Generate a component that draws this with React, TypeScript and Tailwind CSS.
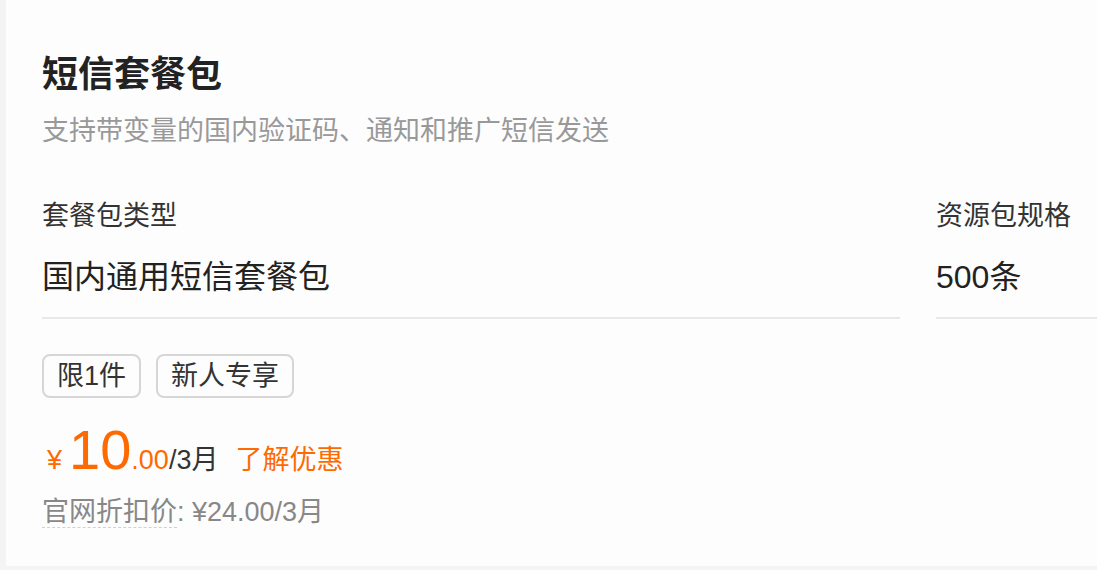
import React from "react";

const font = { fontFamily: '"Liberation Sans", "Noto Sans CJK SC", sans-serif' };

function Field({
  label,
  value,
  className,
}: {
  label: string;
  value: string;
  className?: string;
}) {
  return (
    <div className={className}>
      <div className="text-[27px] leading-[40px] text-[#333]">{label}</div>
      <div className="mt-[19px] pb-[18px] text-[32px] leading-[44px] text-[#222] border-b-2 border-[#e8e8e8]">
        {value}
      </div>
    </div>
  );
}

function Tag({ children }: { children: React.ReactNode }) {
  return (
    <span className="inline-flex items-center h-[44px] px-[13px] border-2 border-[#d6d6d6] rounded-[8px] text-[27px] text-[#333]">
      {children}
    </span>
  );
}

export default function App() {
  return (
    <div
      className="w-full h-[570px] bg-[#f4f4f4] pl-[6px] overflow-hidden"
      style={font}
    >
      <div className="h-[566px] bg-[#fdfdfd] pl-[36px] pt-[51px] overflow-hidden">
        {/* header */}
        <h1 className="text-[36px] leading-[48px] font-bold text-[#222]">
          短信套餐包
        </h1>
        <p className="mt-[12px] text-[27px] leading-[40px] text-[#999]">
          支持带变量的国内验证码、通知和推广短信发送
        </p>

        {/* selections */}
        <div className="mt-[45px] flex gap-[36px]">
          <Field
            className="w-[858px] shrink-0"
            label="套餐包类型"
            value="国内通用短信套餐包"
          />
          <Field className="w-[300px] shrink-0" label="资源包规格" value="500条" />
        </div>

        {/* tags */}
        <div className="mt-[35px] flex gap-[15px]">
          <Tag>限1件</Tag>
          <Tag>新人专享</Tag>
        </div>

        {/* price */}
        <div className="mt-[22px] h-[60px] flex items-baseline whitespace-nowrap">
          <span className="text-[27px] text-[#ff6a00] ml-[5px] mr-[7px]">¥</span>
          <span className="text-[56px] leading-[60px] text-[#ff6a00]">10</span>
          <span className="text-[27px] text-[#ff6a00]">.00</span>
          <span className="text-[27px] text-[#333]">/3月</span>
          <span className="text-[27px] text-[#ff6a00] ml-[17px]">了解优惠</span>
        </div>

        <div className="mt-[12px] text-[27px] leading-[40px] text-[#888] whitespace-nowrap">
          <span className="underline decoration-dashed decoration-[#d0d0d0] decoration-1 underline-offset-[6px]">
            官网折扣价
          </span>
          : ¥24.00/3月
        </div>
      </div>
    </div>
  );
}
